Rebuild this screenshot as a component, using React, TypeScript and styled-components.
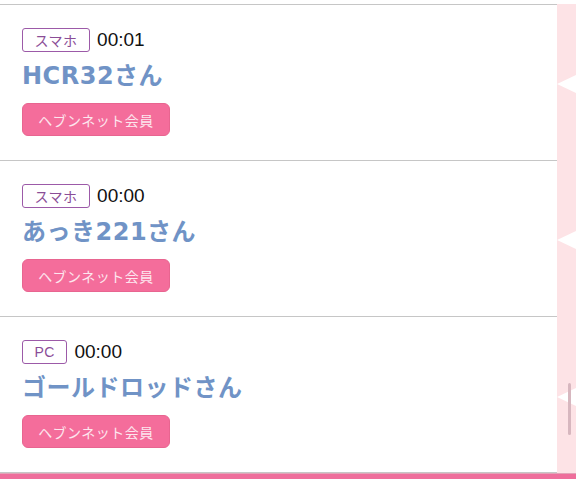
import React from 'react';
import styled, { createGlobalStyle } from 'styled-components';

const GlobalStyle = createGlobalStyle`
  html, body {
    margin: 0;
    padding: 0;
    background: #fff;
  }
  body {
    font-family: "Liberation Sans", "Noto Sans CJK JP", sans-serif;
    width: 576px;
    height: 479px;
    overflow: hidden;
  }
`;

const Page = styled.div`
  padding-top: 4px;
  width: 576px;
  height: 479px;
  box-sizing: border-box;
  display: flex;
  flex-direction: column;
`;

const Body = styled.div`
  display: flex;
  flex: 1;
`;

const List = styled.ul`
  list-style: none;
  margin: 0;
  padding: 0;
  width: 557px;
  border-top: 1px solid #c6c6c6;
`;

const Row = styled.li`
  padding: 23px 22px 24px;
  height: 156px;
  box-sizing: border-box;
  border-bottom: 1px solid #c6c6c6;
  display: flex;
  flex-direction: column;
  align-items: flex-start;
`;

const Meta = styled.div`
  display: flex;
  align-items: center;
  gap: 7px;
  height: 24px;
`;

const Device = styled.span`
  display: inline-flex;
  align-items: center;
  justify-content: center;
  box-sizing: border-box;
  height: 24px;
  padding: 0 11.5px;
  border: 1.5px solid #9c5aa8;
  border-radius: 3px;
  color: #8b4d97;
  font-size: 14px;
  letter-spacing: 0.5px;
`;

const Time = styled.span`
  font-size: 19px;
  color: #111;
`;

const Name = styled.div`
  margin-top: 7px;
  font-family: "DejaVu Sans", "Noto Sans CJK JP", sans-serif;
  font-size: 24px;
  line-height: 35px;
  font-weight: bold;
  color: #7093c6;
  letter-spacing: 0.5px;
`;

const MemberButton = styled.button`
  margin-top: 9px;
  width: 148px;
  height: 34px;
  border: 1px solid #e86590;
  border-radius: 6px;
  background: #f46d9b;
  color: #fde6ee;
  font-family: "Noto Sans CJK JP", sans-serif;
  font-size: 14px;
  letter-spacing: 0.5px;
  padding: 0;
`;

const Side = styled.div`
  position: relative;
  flex: 1;
  background: #fde3e6;
  display: flex;
  flex-direction: column;
`;

const Slot = styled.div`
  flex: 1;
  display: flex;
  align-items: center;
  justify-content: flex-end;
  padding-top: 4px;
`;

const Arrow = styled.span`
  width: 0;
  height: 0;
  border-top: 9px solid transparent;
  border-bottom: 9px solid transparent;
  border-right: 19px solid #fff;
`;

const Scroll = styled.span`
  position: absolute;
  left: 11px;
  top: 379px;
  width: 3px;
  height: 52px;
  border-radius: 2px;
  background: #d7b7bf;
`;

const Footer = styled.div`
  height: 5px;
  border-top: 1px solid #e2a3b7;
  background: #ee6e9b;
`;

const users = [
  { device: 'スマホ', time: '00:01', name: 'HCR32さん' },
  { device: 'スマホ', time: '00:00', name: 'あっき221さん' },
  { device: 'PC', time: '00:00', name: 'ゴールドロッドさん' },
];

const App = () => (
  <>
    <GlobalStyle />
    <Page>
      <Body>
        <List>
          {users.map((u, i) => (
            <Row key={i}>
              <Meta>
                <Device>{u.device}</Device>
                <Time>{u.time}</Time>
              </Meta>
              <Name>{u.name}</Name>
              <MemberButton>ヘブンネット会員</MemberButton>
            </Row>
          ))}
        </List>
        <Side>
          <Slot><Arrow /></Slot>
          <Slot><Arrow /></Slot>
          <Slot><Arrow /></Slot>
          <Scroll />
        </Side>
      </Body>
      <Footer />
    </Page>
  </>
);

export default App;
